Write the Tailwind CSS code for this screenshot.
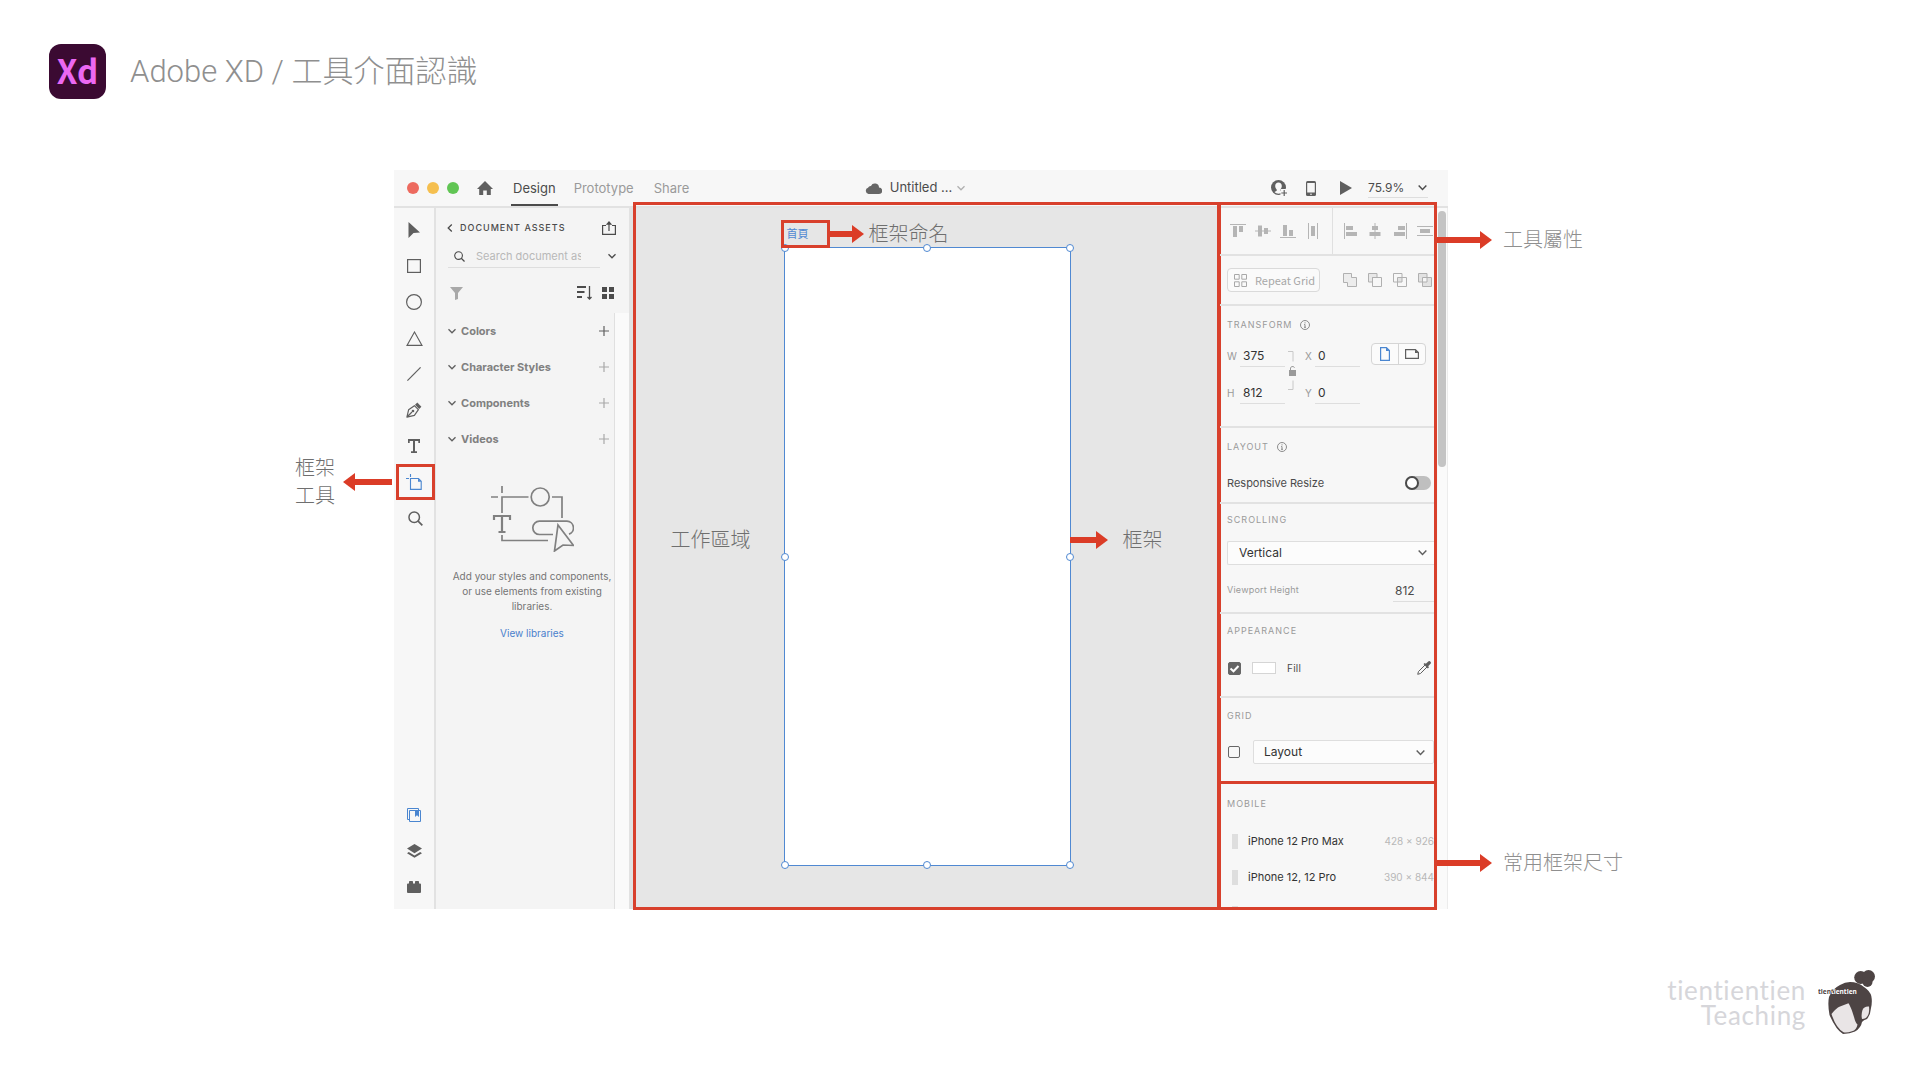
<!DOCTYPE html>
<html lang="zh-Hant">
<head>
  <meta charset="UTF-8" />
  <meta name="viewport" content="width=device-width, initial-scale=1.0"/>
  <title>Adobe XD / 工具介面認識</title>
  <script src="https://cdn.jsdelivr.net/npm/@tailwindcss/browser@4"></script>
</head>
<body class="bg-white min-h-screen flex flex-col font-['Inter','Noto_Sans_CJK_TC',sans-serif] text-[#4b4b4b]">

  <!-- Shared symbols -->
  <svg class="hidden">
    <symbol id="chevron" viewBox="0 0 10 10"><path d="M1.5 3.2 5 6.8l3.500-3.600" fill="none" stroke="currentColor" stroke-width="1.300"/></symbol>
    <symbol id="plus" viewBox="0 0 10 10"><path d="M5 0v10M0 5h10" fill="none" stroke="currentColor" stroke-width="1.200"/></symbol>
    <symbol id="info" viewBox="0 0 10 10"><circle cx="5" cy="5" r="4.500" fill="none" stroke="currentColor" stroke-width=".9"/><path d="M5 2.300v1.100M4.200 4.500H5v2.700M4 7.300h2" fill="none" stroke="currentColor" stroke-width=".9"/></symbol>
    <symbol id="search" viewBox="0 0 14 14"><circle cx="5.800" cy="5.800" r="4.900" fill="none" stroke="currentColor" stroke-width="1.400"/><path d="m9.200 9.200 4.200 4.200" stroke="currentColor" stroke-width="1.600"/></symbol>
    <symbol id="arrow" viewBox="0 0 12 18"><path d="M0 0 12 9 0 18z" fill="currentColor"/></symbol>
  </svg>

  <header class="flex items-center gap-6 pl-[49px] pt-11">
    <div class="w-[57px] h-[55px] rounded-xl bg-[#3b0a32] text-[#ec68f2] font-['Noto_Sans_CJK_TC',sans-serif] font-bold text-[33px] leading-[52px] text-center">Xd</div>
    <h1 class="font-['Roboto','Noto_Sans_CJK_TC',sans-serif] font-light text-[31px] leading-[55px] text-[#8f8f8f]">Adobe XD / 工具介面認識</h1>
  </header>

  <!-- App window -->
  <main class="relative ml-[394px] mr-[472px] mt-[71px] bg-[#f7f7f7]">

    <!-- Title bar -->
    <div class="flex h-[38px] items-center border-b-2 border-[#e2e2e2] pr-6">
      <div class="flex flex-1 items-center self-stretch pl-[13px] text-[13px]">
        <div class="flex gap-2">
          <span class="size-3 rounded-full bg-[#ed6a5f]"></span>
          <span class="size-3 rounded-full bg-[#f5bf4f]"></span>
          <span class="size-3 rounded-full bg-[#61c554]"></span>
        </div>
        <button class="ml-[18px]" aria-label="Home">
          <svg class="w-4 h-[14px] text-[#5f5f5f]" viewBox="0 0 16 14"><path d="M8 0 16 8h-2.200v6H9.800V9.500H6.200V14H2.200V8H0z" fill="currentColor"/></svg>
        </button>
        <nav class="ml-[18px] flex h-full gap-4 text-[#9a9a9a]">
          <a href="#" class="flex items-center border-b-2 border-[#4b4b4b] px-[2px] pt-1 text-[#4b4b4b]">Design</a>
          <a href="#" class="flex items-center border-b-2 border-transparent pt-1">Prototype</a>
          <a href="#" class="flex items-center border-b-2 border-transparent pl-1 pt-1">Share</a>
        </nav>
      </div>
      <div class="flex items-center gap-2 text-[13px]">
        <svg class="w-[17px] h-[11px] text-[#666]" viewBox="0 0 17 11"><path d="M3.500 11A3.200 3.200 0 0 1 3 4.800 3 3 0 0 1 6 2.900 4.200 4.200 0 0 1 14 4.600 3.200 3.200 0 0 1 14 11z" fill="currentColor"/></svg>
        <span>Untitled ...</span>
        <svg class="-ml-1 size-[10px] text-[#b0b0b0]"><use href="#chevron"/></svg>
      </div>
      <div class="flex flex-1 items-center justify-end text-[#5f5f5f]">
        <button aria-label="Invite">
          <svg class="size-4" viewBox="0 0 16 16"><circle cx="7.500" cy="7.500" r="7.500" fill="currentColor"/><path d="M7.500 2.500c2 0 3.300 1.500 3.300 3.500 0 1.500-.7 2.800-1.500 3.500v1.200l2.200 1.300c-1 1-2.500 1.700-4 1.700s-3-.7-4-1.700l2.200-1.300V9.500C4.900 8.800 4.200 7.500 4.200 6c0-2 1.300-3.500 3.300-3.500" fill="#f7f7f7"/><path d="M9.500 9H16v7H9.500z" fill="#f7f7f7"/><path d="M13.200 10v6M10.300 13h5.700" stroke="currentColor" stroke-width="1.200"/></svg>
        </button>
        <button class="ml-[19px]" aria-label="Device preview">
          <svg class="w-[10px] h-[15px]" viewBox="0 0 10 15"><rect width="10" height="15" rx="1.500" fill="currentColor"/><path d="M1.200 2h7.600v9.500H1.200z" fill="#f7f7f7"/><circle cx="5" cy="13.200" r=".8" fill="#f7f7f7"/></svg>
        </button>
        <button class="ml-6" aria-label="Play">
          <svg class="w-3 h-[14px]" viewBox="0 0 12 14"><path d="m0 0 12 7-12 7z" fill="currentColor"/></svg>
        </button>
        <button class="ml-4 -mr-1 flex h-5 w-[60px] items-center justify-between border-b border-[#dedede] text-xs text-[#4b4b4b]">75.9%<svg class="size-[11px]"><use href="#chevron"/></svg></button>
      </div>
    </div>

    <div class="flex">
      <!-- Tools -->
      <div class="flex w-[42px] flex-col border-r-2 border-[#e2e2e2] py-1 text-[#5f5f5f] [&_button]:flex [&_button]:h-9 [&_button]:items-center [&_button]:justify-center">
        <button aria-label="Select"><svg class="w-3 h-4" viewBox="0 0 12 16"><path d="M.5 0 12 10.500 5.500 11 .5 16z" fill="currentColor"/></svg></button>
        <button aria-label="Rectangle"><svg class="size-[14px]" viewBox="0 0 14 14"><rect x=".6" y=".6" width="12.800" height="12.800" fill="none" stroke="currentColor" stroke-width="1.200"/></svg></button>
        <button aria-label="Ellipse"><svg class="size-4" viewBox="0 0 16 16"><circle cx="8" cy="8" r="7.400" fill="none" stroke="currentColor" stroke-width="1.200"/></svg></button>
        <button aria-label="Polygon"><svg class="w-[17px] h-[15px]" viewBox="0 0 17 15"><path d="M8.500 1 16 14.400H1z" fill="none" stroke="currentColor" stroke-width="1.100"/></svg></button>
        <button aria-label="Line"><svg class="size-[14px]" viewBox="0 0 14 14"><path d="M.4 13.600 13.600.4" stroke="currentColor" stroke-width="1.200"/></svg></button>
        <button aria-label="Pen"><svg class="size-4" viewBox="0 0 16 16"><path d="M.9 15.100 2.600 7.800 8.400 3.700l4 4-4 5.600zM1 15l5-5" fill="none" stroke="currentColor" stroke-width="1.200" stroke-linejoin="round"/><circle cx="7" cy="9" r="1.300" fill="currentColor"/><path d="M9 2.800 11.300.6 15.400 4.700 13.200 7z" fill="currentColor"/></svg></button>
        <button aria-label="Text"><svg class="w-3 h-[14px]" viewBox="0 0 12 14"><path d="M0 0h12v4h-1.700V1.900H7v10.300h2V14H3v-1.800h2V1.900H1.700V4H0z" fill="currentColor"/></svg></button>
        <button aria-label="Artboard" class="relative text-[#4a86d0]">
          <svg class="size-4" viewBox="0 0 16 16"><path d="M4.500 4.500h8l2.700 2.700v8.200H4.500zM4.500 0v3M0 4.500h3" fill="none" stroke="currentColor" stroke-width="1.100"/><path d="M12 4.500v3.300h3.300z" fill="currentColor"/></svg>
          <span class="absolute left-[2px] -right-px top-0 h-9 border-[3px] border-[#d8402c]"></span>
          <span class="absolute right-full mr-[2px] flex items-center gap-2 whitespace-nowrap text-left font-light text-[20px] leading-7 text-[#6f6f6f]">
            <span>框架<br>工具</span>
            <span class="flex items-center text-[#db3c27]"><svg class="w-3 h-[18px] rotate-180"><use href="#arrow"/></svg><span class="h-[6px] w-[37px] bg-[#db3c27]"></span></span>
          </span>
        </button>
        <button aria-label="Zoom" class="pl-[3px]"><svg class="size-[15px]"><use href="#search"/></svg></button>
        <button aria-label="Libraries" class="mt-auto text-[#4a86d0]"><svg class="size-[14px]" viewBox="0 0 14 14"><path d="M2.500 2.500h11v11h-11zM2.500 11.500h-2V.5h11v2" fill="none" stroke="currentColor"/><path d="M8 2.500h4V9l-2-1.800L8 9z" fill="currentColor"/></svg></button>
        <button aria-label="Layers"><svg class="w-[15px] h-[14px]" viewBox="0 0 15 14"><path d="m7.500 0 7.500 4.600-7.500 4.600L0 4.600zM1.800 8 0 9.200l7.500 4.600L15 9.200 13.200 8l-5.700 3.500z" fill="currentColor"/></svg></button>
        <button aria-label="Plugins"><svg class="w-[14px] h-3" viewBox="0 0 14 12"><path d="M1 2.500h1V.8Q2 0 2.800 0h2.400Q6 0 6 .8v1.700h2V.8Q8 0 8.800 0h2.400q.8 0 .8.8v1.700h1q1 0 1 1V11q0 1-1 1H1q-1 0-1-1V3.500q0-1 1-1" fill="currentColor"/></svg></button>
      </div>

      <!-- Document assets -->
      <section class="flex w-[197px] flex-col border-r-4 border-[#e2e2e2] bg-[#f4f4f4]">
        <div class="flex items-center pl-[9px] pr-[13px] pt-3">
          <svg class="size-[10px] rotate-90"><use href="#chevron"/></svg>
          <h2 class="ml-[5px] flex-1 text-[9px] leading-4 font-medium tracking-[1px] whitespace-nowrap">DOCUMENT ASSETS</h2>
          <button aria-label="Share assets"><svg class="size-[14px]" viewBox="0 0 14 14"><path d="M4 4.500H.6v8.900h12.800V4.500H10M7 10V1.500" fill="none" stroke="currentColor" stroke-width="1.200"/><path d="M3.800 3.800 7 0l3.200 3.800z" fill="currentColor"/></svg></button>
        </div>
        <div class="flex items-center pl-3 pr-3 pt-2">
          <label class="flex h-6 w-[152px] items-center gap-[11px] border-b border-[#dedede] pl-[6px] pt-[2px]">
            <svg class="size-[11px] shrink-0"><use href="#search"/></svg>
            <input type="text" aria-label="Search document assets" placeholder="Search document assets" class="w-[105px] text-[11px] outline-none placeholder:text-[#b8b8b8]"/>
          </label>
          <svg class="ml-auto size-[10px]"><use href="#chevron"/></svg>
        </div>
        <div class="flex items-center pl-[14px] pr-[15px] pt-[18px]">
          <button aria-label="Filter" class="text-[#a8a8a8]"><svg class="size-[13px]" viewBox="0 0 13 13"><path d="M0 0h13L8 6v6l-3 1V6z" fill="currentColor"/></svg></button>
          <button aria-label="Sort" class="ml-auto"><svg class="w-[15px] h-[14px]" viewBox="0 0 15 14"><path d="M0 1h9M0 6h7.500M0 11h5" stroke="currentColor" stroke-width="2"/><path d="M12.500 0v13M10.500 11l2 2 2-2" fill="none" stroke="currentColor" stroke-width="1.300"/></svg></button>
          <button aria-label="Grid view" class="ml-[10px]"><svg class="size-3" viewBox="0 0 12 12"><path d="M0 0h5v5H0zM7 0h5v5H7zM0 7h5v5H0zM7 7h5v5H7z" fill="currentColor"/></svg></button>
        </div>
        <div class="mt-[13px] flex flex-1">
          <div class="flex-1 border-r border-[#e0e0e0]">
            <ul class="text-[11px] font-bold text-[#808080] [&>li]:flex [&>li]:h-9 [&>li]:items-center [&>li]:gap-1 [&>li]:pl-[11px] [&>li]:pr-[5px]">
              <li><svg class="size-[10px] text-[#5f5f5f]"><use href="#chevron"/></svg>Colors<button aria-label="Add color" class="ml-auto text-[#5f5f5f]"><svg class="size-[10px]"><use href="#plus"/></svg></button></li>
              <li><svg class="size-[10px] text-[#5f5f5f]"><use href="#chevron"/></svg>Character Styles<button aria-label="Add character style" class="ml-auto text-[#a8a8a8]"><svg class="size-[10px]"><use href="#plus"/></svg></button></li>
              <li><svg class="size-[10px] text-[#5f5f5f]"><use href="#chevron"/></svg>Components<button aria-label="Add component" class="ml-auto text-[#a8a8a8]"><svg class="size-[10px]"><use href="#plus"/></svg></button></li>
              <li><svg class="size-[10px] text-[#5f5f5f]"><use href="#chevron"/></svg>Videos<button aria-label="Add video" class="ml-auto text-[#a8a8a8]"><svg class="size-[10px]"><use href="#plus"/></svg></button></li>
            </ul>
            <div class="flex flex-col items-center pl-[14px] pt-[29px] text-center text-[10px] leading-[15px] text-[#747474]">
              <svg class="w-[83px] h-[66px]" viewBox="0 0 83 66" fill="none" stroke="#808080" stroke-width="1.700">
                <path d="M11 0v7M0 11h7M11 27V11h26.500M61 11h10v21M11 49v5.500h46"/>
                <circle cx="49.200" cy="11" r="9"/>
                <path d="M3 34v-4h16v4M11 30v16M7.500 46h7" stroke-width="2.200"/>
                <path d="M62 48.500H48.500a6.700 6.700 0 0 1 0-13.400H76a6.700 6.700 0 0 1 2 13"/>
                <path d="m67 39 15.500 20.500-10.500-.5-8.500 6z" fill="#f4f4f4"/>
              </svg>
              <p class="mt-[17px] whitespace-nowrap">Add your styles and components,<br>or use elements from existing<br>libraries.</p>
              <a href="#" class="mt-3 text-[#4a80cc]">View libraries</a>
            </div>
          </div>
          <div class="w-[14px] bg-[#fafafa]"></div>
        </div>
      </section>

      <!-- Canvas -->
      <section class="relative flex flex-1 justify-center bg-[#e6e6e6] pl-1 pt-[39px]">
        <div class="absolute -top-[6px] -bottom-px left-0 -right-1 border-[3px] border-[#d8402c]"></div>
        <div class="relative h-[619px] w-[287px] border border-[#5089d2] bg-white">
          <!-- selection handles -->
          <i class="absolute -left-1 -top-1 size-2 rounded-full border border-[#5089d2] bg-white"></i>
          <i class="absolute left-1/2 -ml-1 -top-1 size-2 rounded-full border border-[#5089d2] bg-white"></i>
          <i class="absolute -right-1 -top-1 size-2 rounded-full border border-[#5089d2] bg-white"></i>
          <i class="absolute -left-1 top-1/2 -mt-1 size-2 rounded-full border border-[#5089d2] bg-white"></i>
          <i class="absolute -right-1 top-1/2 -mt-1 size-2 rounded-full border border-[#5089d2] bg-white"></i>
          <i class="absolute -left-1 -bottom-1 size-2 rounded-full border border-[#5089d2] bg-white"></i>
          <i class="absolute left-1/2 -ml-1 -bottom-1 size-2 rounded-full border border-[#5089d2] bg-white"></i>
          <i class="absolute -right-1 -bottom-1 size-2 rounded-full border border-[#5089d2] bg-white"></i>

          <div class="absolute bottom-full -left-1 flex items-center whitespace-nowrap">
            <span class="h-7 w-[49px] border-[3px] border-[#d8402c] pl-[3px] text-[11px] leading-[22px] text-[#5089d2]">首頁</span>
            <span class="h-[6px] w-[22px] bg-[#db3c27]"></span>
            <svg class="w-3 h-[18px] text-[#db3c27]"><use href="#arrow"/></svg>
            <span class="ml-[5px] text-[20px] leading-7 font-light text-[#6f6f6f]">框架命名</span>
          </div>
          <div class="absolute right-full top-[278px] mr-[34px] whitespace-nowrap text-[20px] leading-7 font-light text-[#6f6f6f]">工作區域</div>
          <div class="absolute left-full top-[278px] flex items-center whitespace-nowrap">
            <span class="h-[6px] w-[26px] bg-[#db3c27]"></span>
            <svg class="w-3 h-[18px] text-[#db3c27]"><use href="#arrow"/></svg>
            <span class="ml-[15px] text-[20px] leading-7 font-light text-[#6f6f6f]">框架</span>
          </div>
        </div>
      </section>

      <!-- Property inspector -->
      <aside class="relative flex w-[231px]">
        <div class="w-[221px] pr-1 text-[#9a9a9a]">
          <div class="flex h-12 items-center border-b-2 border-[#e2e2e2] pl-[13px] pr-px text-[#b5b5b5]">
            <div class="flex flex-1 gap-[9px]">
              <button aria-label="Align top"><svg class="size-4" viewBox="0 0 16 16"><path d="M0 1.500h16" stroke="currentColor"/><path d="M3 3h4v11H3zM9 3h4v6H9z" fill="currentColor"/></svg></button>
              <button aria-label="Align middle"><svg class="size-4" viewBox="0 0 16 16"><path d="M0 8h16" stroke="currentColor"/><path d="M3 2.500h4v11H3zM9 5h4v6H9z" fill="currentColor"/></svg></button>
              <button aria-label="Align bottom"><svg class="size-4" viewBox="0 0 16 16"><path d="M0 14.500h16" stroke="currentColor"/><path d="M3 2h4v11H3zM9 7h4v6H9z" fill="currentColor"/></svg></button>
              <button aria-label="Distribute horizontally"><svg class="size-4" viewBox="0 0 16 16"><path d="M3.500 0v16M12.500 0v16" stroke="currentColor"/><path d="M6 3h4v10H6z" fill="currentColor"/></svg></button>
            </div>
            <div class="flex h-full items-center gap-[9px] border-l border-[#e0e0e0] pl-[9px]">
              <button aria-label="Align left"><svg class="size-4" viewBox="0 0 16 16"><path d="M2.500 0v16" stroke="currentColor"/><path d="M4 3h7v4H4zM4 9h11v4H4z" fill="currentColor"/></svg></button>
              <button aria-label="Align center"><svg class="size-4" viewBox="0 0 16 16"><path d="M8 0v16" stroke="currentColor"/><path d="M5 3h6v4H5zM2.500 9h11v4h-11z" fill="currentColor"/></svg></button>
              <button aria-label="Align right"><svg class="size-4" viewBox="0 0 16 16"><path d="M14.500 0v16" stroke="currentColor"/><path d="M6 3h7v4H6zM2 9h11v4H2z" fill="currentColor"/></svg></button>
              <button aria-label="Distribute vertically"><svg class="size-4" viewBox="0 0 16 16"><path d="M0 3.500h16M0 12.500h16" stroke="currentColor"/><path d="M3 6h10v4H3z" fill="currentColor"/></svg></button>
            </div>
          </div>

          <div class="flex h-[50px] items-center justify-between border-b-2 border-[#e2e2e2] pl-[10px] pr-[2px]">
            <button class="flex h-6 w-[93px] items-center gap-2 rounded border border-[#dadada] bg-[#fafafa] pl-[6px] font-['Noto_Sans_CJK_TC',sans-serif] text-[11px] whitespace-nowrap text-[#a8a8a8]">
              <svg class="size-[13px]" viewBox="0 0 13 13"><path d="M.5.5h4.700v4.700H.5zM7.800.5h4.700v4.700H7.800zM.5 7.800h4.700v4.700H.5zM7.800 7.800h4.700v4.700H7.800z" fill="none" stroke="currentColor"/></svg>Repeat Grid
            </button>
            <div class="flex gap-[11px] text-[#b0b0b0] [&_svg]:size-[14px]">
              <button aria-label="Add"><svg viewBox="0 0 14 14"><path d="M.5.500h8v4h5v9h-9v-4h-4z" fill="#ececec" stroke="currentColor"/></svg></button>
              <button aria-label="Subtract"><svg viewBox="0 0 14 14"><path d="M.5.500h8.500v4H4.500v4.500h-4z" fill="#e8e8e8" stroke="currentColor"/><path d="M4.500 4.500h9v9h-9z" fill="none" stroke="currentColor"/></svg></button>
              <button aria-label="Intersect"><svg viewBox="0 0 14 14"><path d="M4.500 4.500h4.500v4.500H4.500z" fill="#e2e2e2"/><path d="M.5.500H9V9H.5zM4.500 4.500h9v9h-9z" fill="none" stroke="currentColor"/></svg></button>
              <button aria-label="Exclude overlap"><svg viewBox="0 0 14 14"><path fill-rule="evenodd" d="M.5.500H9V9H.5zM4.500 4.500h9v9h-9z" fill="#e2e2e2" stroke="currentColor"/></svg></button>
            </div>
          </div>

          <div class="h-[122px] border-b-2 border-[#e2e2e2] pl-[10px] pt-[11px]">
            <h3 class="flex items-center gap-2 text-[9px] leading-4 tracking-[1px]">TRANSFORM <svg class="size-[10px] text-[#808080]"><use href="#info"/></svg></h3>
            <div class="mt-[10px] flex text-[10px]">
              <div class="grid grid-cols-[13px_45px] gap-y-3">
                <label for="w" class="pt-px leading-6">W</label>
                <input id="w" value="375" class="h-6 border-b border-[#dedede] pl-[3px] pt-px text-xs text-[#333] outline-none"/>
                <label for="h" class="pt-px leading-6">H</label>
                <input id="h" value="812" class="h-6 border-b border-[#dedede] pl-[3px] pt-px text-xs text-[#333] outline-none"/>
              </div>
              <button aria-label="Lock aspect ratio" class="ml-[2px] mt-2 h-10"><svg class="w-[9px] h-10" viewBox="0 0 9 40"><path d="M1 .500h5v10M1 38.500h5v-9" fill="none" stroke="#c8c8c8"/><path d="M2 19h7v6H2z" fill="#9a9a9a"/><path d="M3.500 19v-2q.5-1.800 2.500-1.500 1 .2 1.500 1.200" fill="none" stroke="#9a9a9a"/></svg></button>
              <div class="ml-[9px] grid grid-cols-[10px_45px] gap-y-3">
                <label for="x" class="pt-px leading-6">X</label>
                <input id="x" value="0" class="h-6 border-b border-[#dedede] pl-[3px] pt-px text-xs text-[#333] outline-none"/>
                <label for="y" class="pt-px leading-6">Y</label>
                <input id="y" value="0" class="h-6 border-b border-[#dedede] pl-[3px] pt-px text-xs text-[#333] outline-none"/>
              </div>
              <div class="ml-[11px] flex h-[22px] w-[55px] divide-x divide-[#d5d5d5] rounded border border-[#d5d5d5] bg-[#fbfbfb]">
                <button aria-label="Portrait" class="flex flex-1 items-center justify-center text-[#4a86d0]"><svg class="w-[10px] h-[14px]" viewBox="0 0 10 14"><path d="M.6.600h5.800l3 3v9.800H.6z" fill="none" stroke="currentColor" stroke-width="1.200"/><path d="M6 .500V4h3.500z" fill="currentColor"/></svg></button>
                <button aria-label="Landscape" class="flex flex-1 items-center justify-center text-[#5f5f5f]"><svg class="w-[14px] h-[10px]" viewBox="0 0 14 10"><path d="M.6.600h9.800l3 3v5.800H.6z" fill="none" stroke="currentColor" stroke-width="1.200"/><path d="M10 .500V4h3.500z" fill="currentColor"/></svg></button>
              </div>
            </div>
          </div>

          <div class="h-[76px] border-b-2 border-[#e2e2e2] pl-[10px] pr-[3px] pt-[11px]">
            <h3 class="flex items-center gap-2 text-[9px] leading-4 tracking-[1px]">LAYOUT <svg class="size-[10px] text-[#808080]"><use href="#info"/></svg></h3>
            <label class="mt-5 flex items-center justify-between text-[11px] leading-4 text-[#4b4b4b]">Responsive Resize
              <input type="checkbox" role="switch" class="h-[14px] w-[26px] appearance-none rounded-full bg-[#bfbfbf] before:block before:size-[14px] before:rounded-full before:border-2 before:border-[#4b4b4b] before:bg-white"/>
            </label>
          </div>

          <div class="h-[110px] border-b-2 border-[#e2e2e2] pl-[10px] pt-2">
            <h3 class="text-[9px] leading-4 tracking-[1px]">SCROLLING</h3>
            <div class="relative mt-[13px]">
              <select aria-label="Scrolling" class="block h-6 w-full appearance-none rounded-l-xs border border-r-0 border-[#dedede] bg-[#fcfcfc] pl-[11px] text-xs text-[#333]"><option>Vertical</option><option>None</option></select>
              <svg class="pointer-events-none absolute right-[6px] top-[6px] size-[11px] text-[#5f5f5f]"><use href="#chevron"/></svg>
            </div>
            <div class="mt-[13px] flex items-center justify-between text-[9px]">
              <label for="vh" class="tracking-wide">Viewport Height</label>
              <input id="vh" value="812" class="h-6 w-[41px] border-b border-[#dedede] pl-[2px] pt-px text-xs text-[#4b4b4b] outline-none"/>
            </div>
          </div>

          <div class="h-[84px] border-b-2 border-[#e2e2e2] pl-[11px] pr-[3px] pt-[9px]">
            <h3 class="-ml-px text-[9px] leading-4 tracking-[1px]">APPEARANCE</h3>
            <div class="mt-[21px] flex items-center text-[10px] leading-4 text-[#4b4b4b]">
              <label class="relative flex size-[13px]"><input type="checkbox" checked aria-label="Fill" class="size-[13px] appearance-none rounded-xs border border-[#666] checked:bg-[#666]"/><svg class="pointer-events-none absolute inset-0 size-[13px]" viewBox="0 0 13 13"><path d="m2.500 6.500 3 2.800 5-5.300" fill="none" stroke="#fff" stroke-width="2"/></svg></label>
              <button aria-label="Fill color" class="ml-[11px] h-3 w-6 border border-[#d5d5d5] bg-white"></button>
              <span class="ml-[11px] tracking-wide">Fill</span>
              <button aria-label="Eyedropper" class="ml-auto text-[#5f5f5f]"><svg class="size-[14px]" viewBox="0 0 14 14"><path d="M8 4 1.500 10.500.7 13.300l2.800-.8L10 6" fill="none" stroke="currentColor"/><path d="m6.500 3 1.300-1 1 .8L11 .700q1.400-1.200 2.500.1 1 1.100-.2 2.300L11.200 5.200l.8 1-1.200 1.300z" fill="currentColor"/></svg></button>
            </div>
          </div>

          <div class="h-[84px] pl-[11px] pt-[10px]">
            <h3 class="-ml-px text-[9px] leading-4 tracking-[1px]">GRID</h3>
            <div class="mt-4 flex items-center gap-[13px]">
              <input type="checkbox" aria-label="Show grid" class="size-3 appearance-none rounded-xs border border-[#666]"/>
              <div class="relative flex-1">
                <select aria-label="Grid type" class="block h-6 w-full appearance-none rounded-xs border border-[#dedede] bg-[#fcfcfc] pl-[10px] text-xs text-[#333]"><option>Layout</option><option>Square</option></select>
                <svg class="pointer-events-none absolute right-2 top-[7px] size-[11px] text-[#5f5f5f]"><use href="#chevron"/></svg>
              </div>
            </div>
          </div>

          <div class="h-[127px] overflow-hidden pl-[10px] pt-[14px]">
            <h3 class="text-[9px] leading-4 tracking-[1px]">MOBILE</h3>
            <ul class="mt-[11px] [&>li]:flex [&>li]:h-9 [&>li]:items-center [&>li]:pl-[5px]">
              <li><span class="h-[15px] w-[6px] bg-[#dedede]"></span><span class="ml-[10px] flex-1 text-[11px] whitespace-nowrap text-[#333]">iPhone 12 Pro Max</span><span class="pt-px text-[10px] whitespace-nowrap text-[#b8b8b8]">428 × 926</span></li>
              <li><span class="h-[15px] w-[6px] bg-[#dedede]"></span><span class="ml-[10px] flex-1 text-[11px] whitespace-nowrap text-[#333]">iPhone 12, 12 Pro</span><span class="pt-px text-[10px] whitespace-nowrap text-[#b8b8b8]">390 × 844</span></li>
              <li><span class="h-[15px] w-[6px] bg-[#dedede]"></span></li>
            </ul>
          </div>
        </div>
        <div class="flex-1 border-r border-[#ececec] bg-[#fafafa] pt-[3px]"><div class="h-[256px] w-2 rounded-full bg-[#c4c4c4]"></div></div>

        <!-- Callouts -->
        <div class="pointer-events-none absolute -top-[6px] left-0 h-[582px] w-[220px] border-[3px] border-[#d8402c]"></div>
        <div class="pointer-events-none absolute -bottom-px left-0 h-[129px] w-[220px] border-[3px] border-[#d8402c]"></div>
        <div class="absolute left-[220px] top-[18px] flex items-center whitespace-nowrap">
          <span class="h-[6px] w-[43px] bg-[#db3c27]"></span>
          <svg class="w-3 h-[18px] text-[#db3c27]"><use href="#arrow"/></svg>
          <span class="ml-[11px] text-[20px] leading-7 font-light text-[#8f8f8f]">工具屬性</span>
        </div>
        <div class="absolute left-[220px] bottom-8 flex items-center whitespace-nowrap">
          <span class="h-[6px] w-[43px] bg-[#db3c27]"></span>
          <svg class="w-3 h-[18px] text-[#db3c27]"><use href="#arrow"/></svg>
          <span class="ml-[11px] text-[20px] leading-7 font-light text-[#8f8f8f]">常用框架尺寸</span>
        </div>
      </aside>
    </div>
  </main>

  <footer class="mt-auto flex items-center justify-end gap-3 pb-11 pr-[44px]">
    <p class="text-right font-['Lato',sans-serif] text-[26px] leading-[25px] tracking-wide text-[#d6d6da]">tientientien<br>Teaching</p>
    <svg class="w-[58px] h-[66px]" viewBox="0 0 58 66">
      <g fill="#4d4444">
        <circle cx="42.700" cy="7.500" r="6.500"/><circle cx="50.500" cy="6.500" r="6.500"/><circle cx="49.500" cy="12" r="5"/>
        <path id="hair" d="M11.500 45Q9.500 34 11 27 14 19 22 15 27 12 32 12 40 12 46 17 52 21 53.300 26 54.500 32 53 38 52.500 45 49 49 45.500 50 44 52 43 58 37 61.500 32 63.500 25 64 18 60 11.500 45"/>
      </g>
      <path d="M13.500 44Q18 38 22 36.500L30.500 33.300Q33 37 36 47 37.500 53 39.500 54.500 38.500 60 34 61.300 29 63 25.500 62.300 18 58 13.500 44" fill="#e9e5e6"/>
      <path d="M51 36.500Q46 36 44.500 40 43 45 44 49 49 49 50.500 44 51.500 40 51 36.500" fill="#e9e5e6"/>
      <clipPath id="head"><use href="#hair"/></clipPath>
      <g font-family="Open Sans, sans-serif" font-weight="700" font-size="6.500">
        <text x="0" y="23.500" fill="#4d4444">tientientien</text>
        <text x="0" y="23.500" fill="#fff" clip-path="url(#head)" aria-hidden="true">tientientien</text>
      </g>
    </svg>
  </footer>
</body>
</html>
